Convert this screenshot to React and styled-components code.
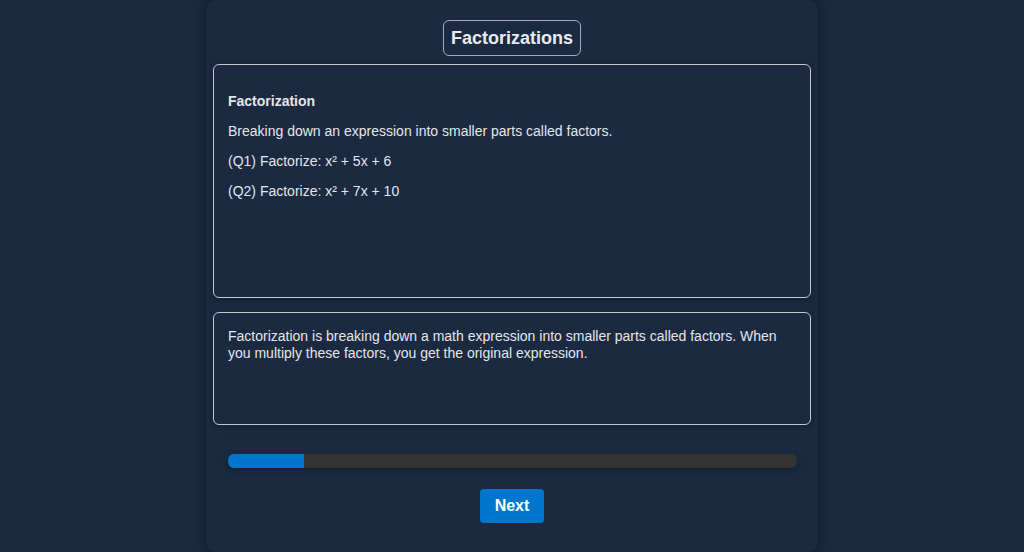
import React from "react";
import styled, { createGlobalStyle } from "styled-components";

const Global = createGlobalStyle`
  html, body { margin: 0; padding: 0; background: #1b2a41; }
  body { font-family: "Liberation Sans", Arial, sans-serif; color: #e4e6ea; }
  * { box-sizing: border-box; }
`;

const Page = styled.div`
  display: flex;
  justify-content: center;
  height: 552px;
  overflow: hidden;
`;

const Card = styled.div`
  width: 612px;
  height: 552px;
  background: #1b2a41;
  border-radius: 10px;
  box-shadow: 0 0 14px rgba(0, 0, 0, 0.45);
  padding: 20px 7px 0;
  display: flex;
  flex-direction: column;
  align-items: center;
`;

const Title = styled.h1`
  margin: 0;
  font-size: 18px;
  line-height: 20px;
  font-weight: 700;
  padding: 7px 7px;
  border: 1px solid #a6abb3;
  border-radius: 6px;
  color: #e8eaee;
`;

const Panel = styled.div`
  align-self: stretch;
  margin-top: ${(p) => p.$mt}px;
  height: ${(p) => p.$h}px;
  border: 1px solid #c4c8ce;
  border-radius: 6px;
  padding: 15px 14px;
  font-size: 14px;
  line-height: ${(p) => p.$lh};
  box-shadow: 0 2px 6px rgba(0, 0, 0, 0.25);
`;

const Heading = styled.h4`
  margin: 13px 0 14px;
  font-size: 14px;
  line-height: 16px;
  font-weight: 700;
`;

const Para = styled.p`
  margin: 14px 0;
  line-height: 16px;
`;

const Explain = styled.p`
  margin: 0;
`;

const Track = styled.div`
  align-self: stretch;
  margin: 29px 14px 0 15px;
  height: 14px;
  background: #333333;
  border-radius: 6px;
  overflow: hidden;
  box-shadow: 0 2px 6px rgba(0, 0, 0, 0.3);
`;

const Fill = styled.div`
  height: 100%;
  background: #0077cc;
`;

const NextButton = styled.button`
  margin-top: 21px;
  height: 34px;
  padding: 0 15px;
  border: none;
  border-radius: 4px;
  background: #0077cc;
  color: #ffffff;
  font-family: "Liberation Sans", Arial, sans-serif;
  font-size: 16px;
  font-weight: 700;
  cursor: pointer;
`;

export default function App() {
  const progress = 13.4;
  return (
    <Page>
      <Global />
      <Card>
        <Title>Factorizations</Title>
        <Panel $mt={8} $h={234} $lh="16px">
          <Heading>Factorization</Heading>
          <Para>Breaking down an expression into smaller parts called factors.</Para>
          <Para>(Q1) Factorize: x² + 5x + 6</Para>
          <Para>(Q2) Factorize: x² + 7x + 10</Para>
        </Panel>
        <Panel $mt={14} $h={113} $lh="17px">
          <Explain>
            Factorization is breaking down a math expression into smaller parts called factors. When
            you multiply these factors, you get the original expression.
          </Explain>
        </Panel>
        <Track>
          <Fill style={{ width: `${progress}%` }} />
        </Track>
        <NextButton>Next</NextButton>
      </Card>
    </Page>
  );
}
